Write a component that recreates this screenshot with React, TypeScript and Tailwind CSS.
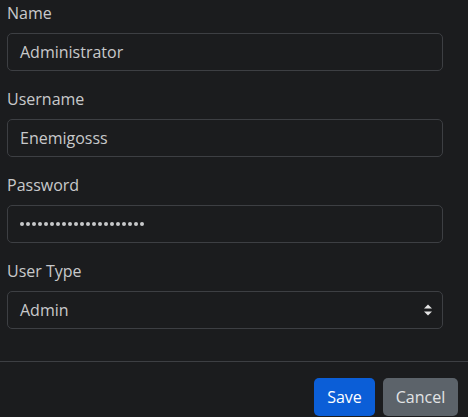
import React from "react";

const font = { fontFamily: '"Open Sans", "Noto Sans", sans-serif' };

function Field({ label, children }: { label: string; children: React.ReactNode }) {
  return (
    <div className="mb-4">
      <div className="mb-2 h-6 text-[16px] leading-6 text-[#c8c9cb]">{label}</div>
      {children}
    </div>
  );
}

function Input({ value, password }: { value: string; password?: boolean }) {
  return (
    <div className="flex h-[38px] items-center rounded-[5px] border border-[#3d3f43] bg-[#1b1c1e] px-3 text-[16px] text-[#c8c9cb]">
      {password ? (
        <span className="flex gap-[2.5px]">
          {Array.from({ length: 21 }).map((_, i) => (
            <span key={i} className="block h-[3.5px] w-[3.5px] rounded-full bg-[#c8c9cb]" />
          ))}
        </span>
      ) : (
        value
      )}
    </div>
  );
}

export default function App() {
  return (
    <div className="h-[417px] w-[468px] overflow-hidden bg-[#1b1c1e]" style={font}>
      <div className="pl-[7px] pr-[25px] pt-px pb-4">
        <Field label="Name">
          <Input value="Administrator" />
        </Field>
        <Field label="Username">
          <Input value="Enemigosss" />
        </Field>
        <Field label="Password">
          <Input value="" password />
        </Field>
        <Field label="User Type">
          <div className="flex h-[38px] items-center justify-between rounded-[5px] border border-[#3d3f43] bg-[#1b1c1e] pl-3 pr-[9px] text-[16px] text-[#c8c9cb]">
            <span>Admin</span>
            <svg width="10" height="14" viewBox="0 0 10 14">
              <path d="M1 5.5 L5 1.5 L9 5.5 Z" fill="#e5e5e5" />
              <path d="M1 8.5 L5 12.5 L9 8.5 Z" fill="#e5e5e5" />
            </svg>
          </div>
        </Field>
      </div>
      <div className="flex justify-end gap-2 border-t border-[#3d3f43] pr-[10px] pt-4">
        <button className="h-[38px] w-[61px] rounded-[5px] bg-[#0b5ed7] text-[16px] text-white">Save</button>
        <button className="h-[38px] w-[75px] rounded-[5px] bg-[#5c636a] text-[16px] text-[#e2e3e5]">Cancel</button>
      </div>
    </div>
  );
}
